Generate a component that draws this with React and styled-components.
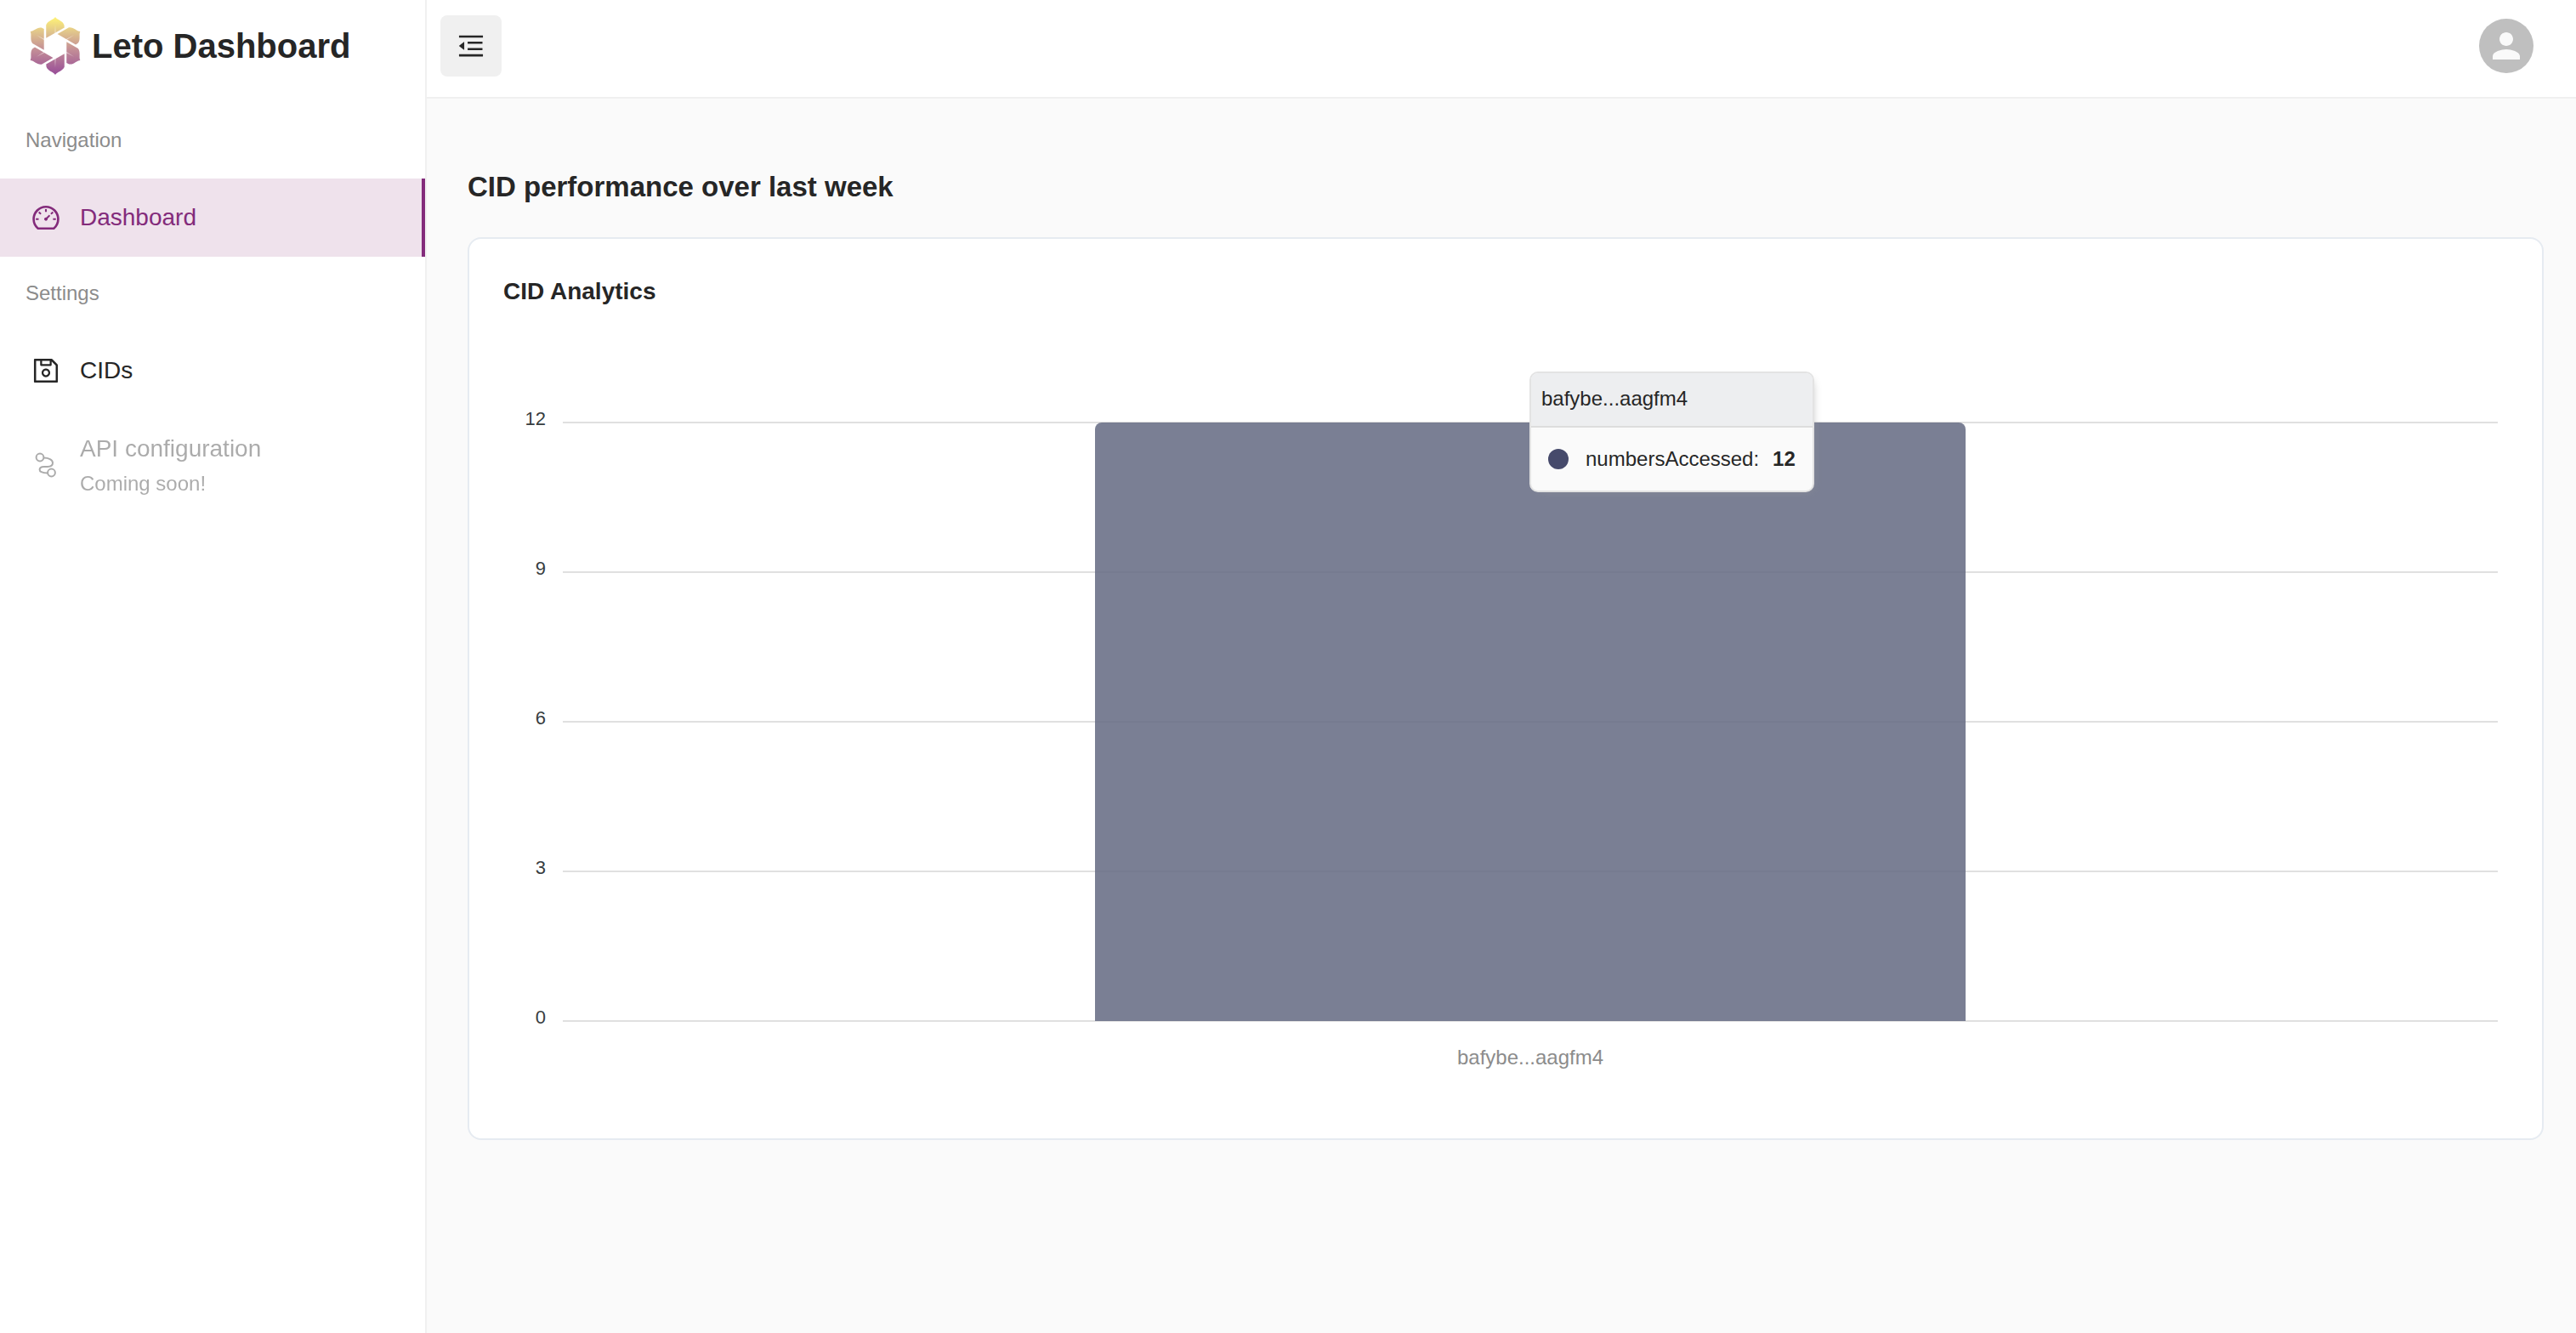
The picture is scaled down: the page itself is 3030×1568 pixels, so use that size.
import React from "react";
import styled, { createGlobalStyle } from "styled-components";
import {
  AiOutlineDashboard,
  AiOutlineMenuFold,
  AiOutlineSave,
} from "react-icons/ai";
import { MdPerson } from "react-icons/md";

const GlobalStyle = createGlobalStyle`
  *, *::before, *::after { box-sizing: border-box; }
  body {
    margin: 0;
    background: #fafafa;
    color: #262626;
    font-family: Helvetica, "Liberation Sans", Arial, sans-serif;
  }
  h1, h2, h3, ul, p { margin: 0; padding: 0; }
  button { font: inherit; border: 0; padding: 0; cursor: pointer; }
`;

const Layout = styled.div`
  display: flex;
  min-height: 100vh;
`;

const Sidebar = styled.aside`
  flex: 0 0 502px;
  background: #fff;
  border-right: 2px solid #f0f0f0;
`;

const Brand = styled.a`
  display: flex;
  align-items: center;
  gap: 13px;
  height: 108px;
  padding: 0 35px;
  color: inherit;
  text-decoration: none;
`;

const BrandName = styled.h1`
  font-size: 40px;
  line-height: 40px;
  font-weight: 700;
`;

const Nav = styled.nav`
  padding-top: 14px;
`;

const NavCaption = styled.h2`
  padding: 24px 30px 26px;
  font-size: 24px;
  line-height: 38px;
  font-weight: 400;
  color: #8c8c8c;
`;

const NavList = styled.ul`
  list-style: none;
`;

const NavLink = styled.a`
  display: flex;
  align-items: center;
  gap: 22px;
  padding: 24px 32px 24px 36px;
  border-right: 4px solid ${(p) => (p.$active ? "#832b7b" : "transparent")};
  background: ${(p) => (p.$active ? "#efe2ec" : "transparent")};
  color: ${(p) => (p.$active ? "#832b7b" : "#262626")};
  opacity: ${(p) => (p["aria-disabled"] ? 0.38 : 1)};
  text-decoration: none;

  svg { flex: none; }
`;

const NavText = styled.span`
  display: flex;
  flex-direction: column;
  font-size: 28px;
  line-height: 44px;
`;

const NavNote = styled.small`
  font-size: 24px;
  line-height: 38px;
`;

const Content = styled.div`
  flex: 1;
  min-width: 0;
`;

const TopBar = styled.header`
  display: flex;
  align-items: center;
  justify-content: space-between;
  padding: 18px 50px 24px 16px;
  background: #fff;
  border-bottom: 2px solid #f0f0f0;
`;

const ToggleButton = styled.button`
  display: grid;
  place-items: center;
  width: 72px;
  height: 72px;
  border-radius: 8px;
  background: #f0f0f0;
  color: #262626;
`;

const AvatarButton = styled.button`
  display: grid;
  place-items: center;
  width: 64px;
  height: 64px;
  border-radius: 50%;
  background: #bfbfbf;
  color: #fafafa;
`;

const Main = styled.main`
  padding: 84px 38px 48px 48px;
`;

const SectionTitle = styled.h2`
  margin-bottom: 39px;
  font-size: 33px;
  line-height: 40px;
  font-weight: 700;
`;

const Card = styled.section`
  padding: 40px 52px 77px 40px;
  background: #fff;
  border: 2px solid #e6ebf1;
  border-radius: 16px;
`;

const CardTitle = styled.h3`
  font-size: 28px;
  line-height: 44px;
  font-weight: 700;
`;

const Chart = styled.div`
  display: grid;
  grid-template-columns: 70px 1fr;
  padding-top: 131px;
`;

const YAxis = styled.div`
  display: grid;
  grid-template-rows: repeat(4, 176px) 2px;
  margin-top: -16px;
  padding-right: 20px;
  font-size: 22px;
  line-height: 26px;
  text-align: right;
  color: #373d3f;
`;

const Plot = styled.div`
  position: relative;
  display: grid;
`;

const GridLines = styled.div`
  grid-area: 1 / 1;
  display: grid;
  grid-template-rows: repeat(4, 176px) 2px;
`;

const GridLine = styled.div`
  border-top: 2px solid #e0e0e0;
`;

const Bars = styled.div`
  grid-area: 1 / 1;
  display: flex;
  align-items: flex-end;
  justify-content: space-around;
  padding: 1px 0;
`;

const Bar = styled.div`
  width: 45%;
  border-radius: 8px 8px 0 0;
  background: rgba(99, 104, 129, 0.85);
`;

const XAxis = styled.div`
  grid-column: 2;
  display: flex;
  justify-content: space-around;
  padding-top: 24px;
  font-size: 24px;
  line-height: 36px;
  color: #8c8c8c;
`;

const Tooltip = styled.div`
  position: absolute;
  top: -59px;
  left: calc(50% - 1px);
  overflow: hidden;
  border: 2px solid #e3e3e3;
  border-radius: 10px;
  background: #fafafa;
  box-shadow: 4px 4px 12px -8px #999;
  font-size: 24px;
  white-space: nowrap;
`;

const TooltipTitle = styled.div`
  padding: 12px 12px 14px;
  border-bottom: 2px solid #ddd;
  background: #edeef0;
  line-height: 36px;
`;

const TooltipRow = styled.div`
  display: flex;
  align-items: center;
  padding: 20px;
  line-height: 34px;
`;

const Marker = styled.span`
  width: 24px;
  height: 24px;
  margin-right: 20px;
  border-radius: 50%;
  background: #464a6b;
`;

const TooltipValue = styled.strong`
  margin-left: 16px;
`;

function LetoLogo() {
  return (
    <svg width="60" height="70" viewBox="-92 -107 184 214" aria-hidden="true">
      <defs>
        <linearGradient id="leto-fill" gradientUnits="userSpaceOnUse" x1="0" y1="-100" x2="0" y2="104">
          <stop offset="0" stopColor="#fdf077" />
          <stop offset="0.25" stopColor="#e0c48c" />
          <stop offset="0.55" stopColor="#c48f96" />
          <stop offset="1" stopColor="#974c98" />
        </linearGradient>
        <mask id="leto-leaves" maskUnits="userSpaceOnUse" x="-110" y="-110" width="220" height="220">
          {[0, 60, 120, 180, 240, 300].map((angle) => (
            <g key={angle} transform={`rotate(${angle})`}>
              <path
                fill="#fff"
                d="M0-104C7-93 26-92 32-76L33-66-33-28V-76C-26-92-7-93 0-104Z"
              />
              <path fill="#000" fillOpacity="0.5" d="M0-78 2-46H-2Z" />
            </g>
          ))}
        </mask>
      </defs>
      <rect x="-110" y="-110" width="220" height="220" fill="url(#leto-fill)" mask="url(#leto-leaves)" />
    </svg>
  );
}

function RouteIcon() {
  return (
    <svg width="36" height="36" viewBox="0 0 36 36" fill="none" stroke="currentColor" strokeWidth="2" aria-hidden="true">
      <circle cx="11" cy="9" r="4.4" />
      <circle cx="24.5" cy="27" r="4.4" />
      <path d="M15.6 9.6C21 9.6 26 11.6 26 15.6C26 19.4 23 20 20 20H15.6C12.4 20 10.6 21.4 10.6 23.6C10.6 26.4 13.8 27.4 20 27.4" />
    </svg>
  );
}

const data = [{ cid: "bafybe...aagfm4", numbersAccessed: 12 }];
const ticks = [12, 9, 6, 3, 0];

function AnalyticsChart() {
  const max = ticks[0];
  return (
    <Chart>
      <YAxis>
        {ticks.map((tick) => (
          <span key={tick}>{tick}</span>
        ))}
      </YAxis>
      <Plot>
        <GridLines>
          {ticks.map((tick) => (
            <GridLine key={tick} />
          ))}
        </GridLines>
        <Bars>
          {data.map((d) => (
            <Bar key={d.cid} style={{ height: `${(d.numbersAccessed / max) * 100}%` }} />
          ))}
        </Bars>
        <Tooltip role="tooltip">
          <TooltipTitle>{data[0].cid}</TooltipTitle>
          <TooltipRow>
            <Marker />
            <span>numbersAccessed:</span>
            <TooltipValue>{data[0].numbersAccessed}</TooltipValue>
          </TooltipRow>
        </Tooltip>
      </Plot>
      <XAxis>
        {data.map((d) => (
          <span key={d.cid}>{d.cid}</span>
        ))}
      </XAxis>
    </Chart>
  );
}

export default function App() {
  return (
    <>
      <GlobalStyle />
      <Layout>
        <Sidebar>
          <Brand href="#">
            <LetoLogo />
            <BrandName>Leto Dashboard</BrandName>
          </Brand>
          <Nav>
            <NavCaption>Navigation</NavCaption>
            <NavList>
              <li>
                <NavLink href="#dashboard" $active aria-current="page">
                  <AiOutlineDashboard size={36} />
                  <NavText>Dashboard</NavText>
                </NavLink>
              </li>
            </NavList>
            <NavCaption>Settings</NavCaption>
            <NavList>
              <li>
                <NavLink href="#cids">
                  <AiOutlineSave size={36} />
                  <NavText>CIDs</NavText>
                </NavLink>
              </li>
              <li>
                <NavLink href="#api" aria-disabled="true">
                  <RouteIcon />
                  <NavText>
                    API configuration
                    <NavNote>Coming soon!</NavNote>
                  </NavText>
                </NavLink>
              </li>
            </NavList>
          </Nav>
        </Sidebar>
        <Content>
          <TopBar>
            <ToggleButton type="button" aria-label="Collapse menu">
              <AiOutlineMenuFold size={36} />
            </ToggleButton>
            <AvatarButton type="button" aria-label="Account">
              <MdPerson size={48} />
            </AvatarButton>
          </TopBar>
          <Main>
            <SectionTitle>CID performance over last week</SectionTitle>
            <Card>
              <CardTitle>CID Analytics</CardTitle>
              <AnalyticsChart />
            </Card>
          </Main>
        </Content>
      </Layout>
    </>
  );
}
